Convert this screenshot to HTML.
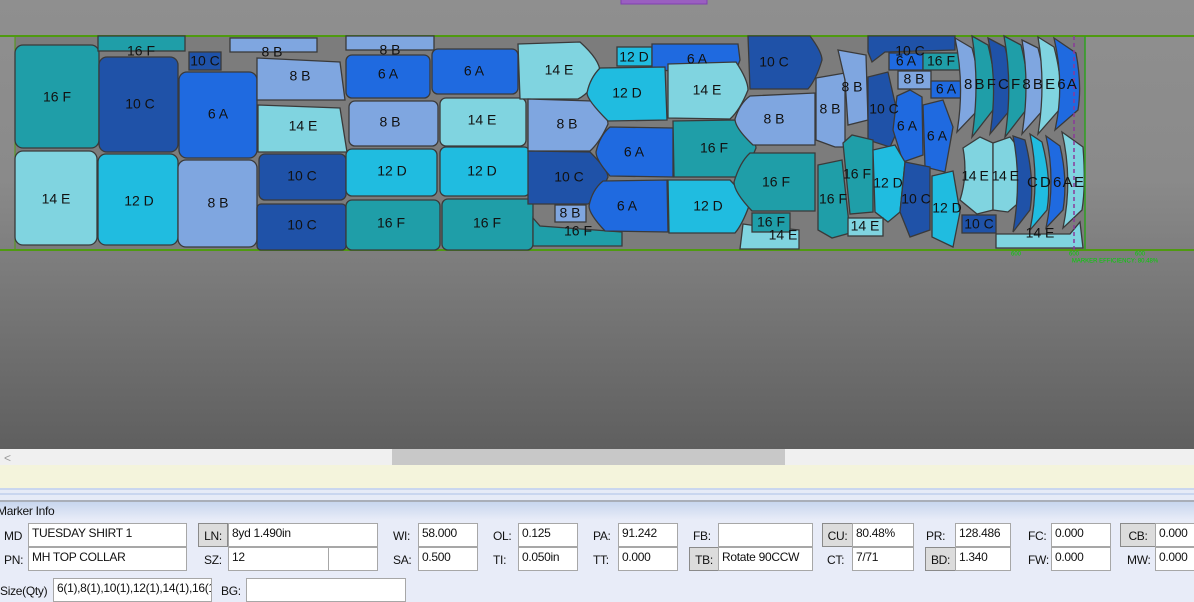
<!DOCTYPE html>
<html><head><meta charset="utf-8"><style>
*{margin:0;padding:0;box-sizing:border-box}
body{width:1194px;height:598px;overflow:hidden;font-family:"Liberation Sans",sans-serif;position:relative;background:#e8ecf8}
#view{position:absolute;left:0;top:0;width:1194px;height:449px;background:linear-gradient(#8f8f8f,#8a8a8a 40%,#5f5f5f)}
#sb{position:absolute;left:0;top:449px;width:1194px;height:16px;background:#f0f0f0}
#thumb{position:absolute;left:392px;top:0;width:393px;height:16px;background:#c8c8c8}
#beige{position:absolute;left:0;top:465px;width:1194px;height:23px;background:#f4f4dc}
#band{position:absolute;left:0;top:488px;width:1194px;height:12px;background:#e6ebf7;border-top:2px solid #c9d6ef;}
#band:after{content:"";position:absolute;left:0;top:3px;width:100%;height:2px;background:#c9d6ef}
#hdr{position:absolute;left:0;top:500px;width:1194px;height:20px;border-top:2px solid #a9aeb8;background:linear-gradient(#c8d6ee,#e8ecf8);font-size:12px;color:#111;padding:2px 0 0 0;text-indent:-3px;letter-spacing:-0.3px}
.l{position:absolute;font-size:12px;color:#111;letter-spacing:-0.3px}
.i{position:absolute;height:24px;background:#fff;border:1px solid #a7a7a7;font-size:12px;color:#111;padding:2px 0 0 3px;white-space:nowrap;overflow:hidden;letter-spacing:-0.3px}
.b{position:absolute;height:24px;background:#dcdcdc;border:1px solid #8a8a8a;font-size:12px;color:#111;text-align:center;padding-top:5px;letter-spacing:-0.3px}
svg text{font-family:"Liberation Sans",sans-serif;font-size:14px;fill:#111;text-anchor:middle;dominant-baseline:middle}
</style></head><body>
<div id="view">
<svg width="1194" height="449" style="position:absolute;left:0;top:0">
<rect x="621" y="-2" width="86" height="6" fill="#9a5fc0" stroke="#8040b0"/>
<rect x="15" y="36" width="1070" height="214" fill="#7c7c7c"/>
<line x1="0" y1="36" x2="1194" y2="36" stroke="#4f9a10" stroke-width="2"/>
<line x1="0" y1="250" x2="1194" y2="250" stroke="#4f9a10" stroke-width="2"/>
<line x1="15" y1="36" x2="15" y2="250" stroke="#4f9a10" stroke-width="1"/>
<g stroke="#3a3a3a" stroke-width="1.3">
<rect x="15" y="45" width="84" height="103" rx="8" fill="#1f9ea8"/>
<rect x="15" y="151" width="82" height="94" rx="8" fill="#80d4e0"/>
<rect x="98" y="36" width="87" height="15" fill="#1f9ea8"/>
<rect x="99" y="57" width="79" height="95" rx="8" fill="#1f52a8"/>
<rect x="98" y="154" width="80" height="91" rx="8" fill="#20bce0"/>
<rect x="189" y="52" width="32" height="18" fill="#1f52a8"/>
<rect x="179" y="72" width="78" height="86" rx="8" fill="#1f6ae0"/>
<rect x="178" y="160" width="79" height="87" rx="8" fill="#7fa6e0"/>
<rect x="230" y="38" width="87" height="14" fill="#7fa6e0"/>
<path d="M257,58 L340,62 L345,100 L257,100Z" fill="#7fa6e0"/>
<path d="M258,105 L340,108 L347,152 L258,152Z" fill="#80d4e0"/>
<rect x="259" y="154" width="87" height="46" rx="6" fill="#1f52a8"/>
<rect x="257" y="204" width="89" height="46" rx="4" fill="#1f52a8"/>
<rect x="346" y="36" width="88" height="14" fill="#7fa6e0"/>
<rect x="346" y="55" width="84" height="43" rx="6" fill="#1f6ae0"/>
<rect x="349" y="101" width="89" height="45" rx="6" fill="#7fa6e0"/>
<rect x="346" y="149" width="91" height="47" rx="6" fill="#20bce0"/>
<rect x="346" y="200" width="94" height="50" rx="6" fill="#1f9ea8"/>
<rect x="432" y="49" width="86" height="45" rx="6" fill="#1f6ae0"/>
<rect x="440" y="98" width="86" height="48" rx="6" fill="#80d4e0"/>
<rect x="440" y="147" width="90" height="49" rx="6" fill="#20bce0"/>
<rect x="442" y="199" width="91" height="51" rx="6" fill="#1f9ea8"/>
<path d="M518,44 L580,42 Q600,60 600,72 Q592,92 578,99 L520,99Z" fill="#80d4e0"/>
<path d="M528,99 L592,101 Q608,115 608,124 Q600,142 590,151 L528,151Z" fill="#7fa6e0"/>
<path d="M528,151 L590,152 Q608,170 608,177 Q600,196 588,204 L528,204Z" fill="#1f52a8"/>
<rect x="555" y="205" width="31" height="17" fill="#7fa6e0"/>
<path d="M533,218 L540,226 L622,232 L622,246 L533,246Z" fill="#1f9ea8"/>
<rect x="617" y="47" width="35" height="19" fill="#20bce0"/>
<path d="M652,44 L738,44 L740,60 L735,73 L652,70Z" fill="#1f6ae0"/>
<path d="M600,68 L665,67 L667,120 L608,121 Q587,100 587,93 Q590,78 600,68Z" fill="#20bce0"/>
<path d="M668,64 L736,62 Q748,80 748,90 Q740,110 730,119 L668,118Z" fill="#80d4e0"/>
<path d="M610,127 L673,128 L673,177 L610,176 Q596,160 596,152 Q600,135 610,127Z" fill="#1f6ae0"/>
<path d="M673,121 L735,120 Q756,140 756,148 Q748,168 740,177 L674,177Z" fill="#1f9ea8"/>
<path d="M603,181 L667,180 L668,232 L605,231 Q589,214 589,206 Q592,190 603,181Z" fill="#1f6ae0"/>
<path d="M668,180 L730,180 Q749,200 749,206 Q742,225 735,233 L669,233Z" fill="#20bce0"/>
<path d="M748,36 L810,36 Q822,52 822,60 Q816,80 808,89 L750,89Z" fill="#1f52a8"/>
<path d="M750,96 L815,93 L815,145 L753,145 Q735,128 735,119 Q740,103 750,96Z" fill="#7fa6e0"/>
<path d="M750,153 L815,153 L815,211 L752,211 Q734,192 734,182 Q740,162 750,153Z" fill="#1f9ea8"/>
<path d="M743,224 L750,225 L799,230 L799,249 L740,249Z" fill="#80d4e0"/>
<rect x="752" y="213" width="38" height="19" fill="#1f9ea8"/>
<path d="M816,78 L845,73 L845,147 L835,147 L816,140Z" fill="#7fa6e0"/>
<path d="M838,50 L866,55 L868,120 L848,125 L845,80Z" fill="#7fa6e0"/>
<path d="M868,36 L955,36 L955,50 L885,52 L872,62 L868,52Z" fill="#1f52a8"/>
<rect x="889" y="53" width="34" height="17" fill="#1f6ae0"/>
<rect x="923" y="53" width="37" height="17" fill="#1f9ea8"/>
<rect x="898" y="71" width="33" height="18" fill="#7fa6e0"/>
<rect x="931" y="81" width="34" height="17" fill="#1f6ae0"/>
<path d="M868,77 L888,72 L900,125 L890,147 L868,140Z" fill="#1f52a8"/>
<path d="M897,96 L910,90 L922,97 L923,155 L903,162 L893,130Z" fill="#1f6ae0"/>
<path d="M923,105 L943,100 L953,127 L945,172 L925,167Z" fill="#1f6ae0"/>
<path d="M843,143 L852,135 L873,140 L873,212 L850,214Z" fill="#1f9ea8"/>
<path d="M818,165 L842,160 L850,233 L832,238 L818,230Z" fill="#1f9ea8"/>
<path d="M873,150 L895,145 L905,162 L900,212 L888,222 L875,212Z" fill="#20bce0"/>
<path d="M905,162 L930,167 L930,230 L910,237 L900,212Z" fill="#1f52a8"/>
<path d="M932,176 L953,171 L960,212 L953,247 L932,237Z" fill="#20bce0"/>
<rect x="848" y="218" width="35" height="18" fill="#80d4e0"/>
<rect x="962" y="215" width="34" height="18" fill="#1f52a8"/>
<path d="M955,38 L972,48 Q982,85 978,110 L957,132 Q965,85 955,38Z" fill="#7fa6e0"/>
<path d="M972,36 L988,45 Q998,85 993,110 L972,137 Q980,85 972,36Z" fill="#1f9ea8"/>
<path d="M988,38 L1005,47 Q1015,85 1010,110 L990,134 Q998,85 988,38Z" fill="#1f52a8"/>
<path d="M1004,36 L1021,45 Q1031,85 1026,110 L1005,137 Q1013,85 1004,36Z" fill="#1f9ea8"/>
<path d="M1022,40 L1038,48 Q1048,85 1043,110 L1022,134 Q1030,85 1022,40Z" fill="#7fa6e0"/>
<path d="M1038,37 L1054,47 Q1064,85 1059,110 L1038,134 Q1046,85 1038,37Z" fill="#80d4e0"/>
<path d="M1054,38 L1076,53 Q1082,85 1078,110 L1055,130 Q1065,85 1054,38Z" fill="#1f6ae0"/>
<path d="M963,148 L980,137 L993,143 L993,210 L977,214 L960,200 Q968,175 963,148Z" fill="#80d4e0"/>
<path d="M993,143 L1010,137 L1020,150 Q1015,175 1022,200 L1008,212 L993,210Z" fill="#80d4e0"/>
<path d="M1013,136 L1025,140 Q1035,180 1030,210 L1013,232 Q1022,180 1013,136Z" fill="#1f52a8"/>
<path d="M1030,134 L1042,142 Q1052,180 1047,210 L1030,230 Q1040,180 1030,134Z" fill="#20bce0"/>
<path d="M1046,136 L1060,146 Q1068,180 1063,210 L1046,228 Q1056,180 1046,136Z" fill="#1f6ae0"/>
<path d="M1062,132 L1083,147 Q1086,185 1082,210 L1063,228 Q1073,180 1062,132Z" fill="#80d4e0"/>
<path d="M996,234 L1070,234 L1080,222 L1083,248 L996,248Z" fill="#80d4e0"/>
</g>
<line x1="1074" y1="36" x2="1074" y2="250" stroke="#8a3a9a" stroke-width="1.5" stroke-dasharray="4,3"/>
<line x1="1085" y1="36" x2="1085" y2="250" stroke="#2fa020" stroke-width="1.5"/>
<text x="1016" y="254" style="font-size:6px;fill:#00d000">600</text>
<text x="1074" y="254" style="font-size:6px;fill:#00d000">600</text>
<text x="1140" y="254" style="font-size:6px;fill:#00d000">600</text>
<text x="1115" y="261" style="font-size:6px;fill:#00d000">MARKER EFFICIENCY: 80.48%</text>
<g>
<text x="57" y="98">16 F</text><text x="56" y="200">14 E</text><text x="141" y="52">16 F</text>
<text x="140" y="105">10 C</text><text x="139" y="202">12 D</text><text x="205" y="62">10 C</text>
<text x="218" y="115">6 A</text><text x="218" y="204">8 B</text><text x="272" y="53">8 B</text>
<text x="300" y="77">8 B</text><text x="303" y="127">14 E</text><text x="302" y="177">10 C</text>
<text x="302" y="226">10 C</text><text x="390" y="51">8 B</text><text x="388" y="75">6 A</text>
<text x="390" y="123">8 B</text><text x="392" y="172">12 D</text><text x="391" y="224">16 F</text>
<text x="474" y="72">6 A</text><text x="482" y="121">14 E</text><text x="482" y="172">12 D</text>
<text x="487" y="224">16 F</text><text x="559" y="71">14 E</text><text x="567" y="125">8 B</text>
<text x="569" y="178">10 C</text><text x="570" y="214">8 B</text><text x="578" y="232">16 F</text>
<text x="634" y="58">12 D</text><text x="697" y="60">6 A</text><text x="627" y="94">12 D</text>
<text x="707" y="91">14 E</text><text x="634" y="153">6 A</text><text x="714" y="149">16 F</text>
<text x="627" y="207">6 A</text><text x="708" y="207">12 D</text><text x="774" y="63">10 C</text>
<text x="774" y="120">8 B</text><text x="776" y="183">16 F</text><text x="771" y="223">16 F</text>
<text x="783" y="236">14 E</text><text x="830" y="110">8 B</text><text x="852" y="88">8 B</text>
<text x="910" y="52">10 C</text><text x="906" y="62">6 A</text><text x="941" y="62">16 F</text>
<text x="914" y="80">8 B</text><text x="946" y="90">6 A</text><text x="884" y="110">10 C</text>
<text x="907" y="127">6 A</text><text x="937" y="137">6 A</text><text x="857" y="175">16 F</text>
<text x="833" y="200">16 F</text><text x="888" y="184">12 D</text><text x="916" y="200">10 C</text>
<text x="947" y="209">12 D</text><text x="865" y="227">14 E</text><text x="979" y="225">10 C</text>
<text x="1020" y="85" style="font-size:15px;letter-spacing:-1px">8 B F C F 8 B E 6 A</text>
<text x="990" y="177" style="letter-spacing:-0.5px">14 E 14 E</text><text x="1055" y="183" style="font-size:15px;letter-spacing:-1px">C D 6 A E</text>
<text x="1040" y="234">14 E</text>
</g>
</svg>
</div>
<div id="sb"><span style="position:absolute;left:4px;top:2px;font-size:12px;color:#999">&lt;</span><div id="thumb"></div></div>
<div id="beige"></div>
<div id="band"></div>
<div id="hdr">Marker Info</div>

<div class="l" style="left:4px;top:529px">MD</div>
<div class="i" style="left:28px;top:523px;width:159px">TUESDAY SHIRT 1</div>
<div class="l" style="left:4px;top:553px">PN:</div>
<div class="i" style="left:28px;top:547px;width:159px">MH TOP COLLAR</div>
<div class="b" style="left:198px;top:523px;width:30px">LN:</div>
<div class="i" style="left:228px;top:523px;width:150px">8yd 1.490in</div>
<div class="l" style="left:204px;top:553px">SZ:</div>
<div class="i" style="left:228px;top:547px;width:101px">12</div>
<div class="i" style="left:328px;top:547px;width:50px"></div>
<div class="l" style="left:393px;top:529px">WI:</div>
<div class="i" style="left:418px;top:523px;width:60px">58.000</div>
<div class="l" style="left:393px;top:553px">SA:</div>
<div class="i" style="left:418px;top:547px;width:60px">0.500</div>
<div class="l" style="left:493px;top:529px">OL:</div>
<div class="i" style="left:518px;top:523px;width:60px">0.125</div>
<div class="l" style="left:493px;top:553px">TI:</div>
<div class="i" style="left:518px;top:547px;width:60px">0.050in</div>
<div class="l" style="left:593px;top:529px">PA:</div>
<div class="i" style="left:618px;top:523px;width:60px">91.242</div>
<div class="l" style="left:593px;top:553px">TT:</div>
<div class="i" style="left:618px;top:547px;width:60px">0.000</div>
<div class="l" style="left:693px;top:529px">FB:</div>
<div class="i" style="left:718px;top:523px;width:95px"></div>
<div class="b" style="left:689px;top:547px;width:30px">TB:</div>
<div class="i" style="left:718px;top:547px;width:95px">Rotate 90CCW</div>
<div class="b" style="left:822px;top:523px;width:31px">CU:</div>
<div class="i" style="left:852px;top:523px;width:62px">80.48%</div>
<div class="l" style="left:827px;top:553px">CT:</div>
<div class="i" style="left:852px;top:547px;width:62px">7/71</div>
<div class="l" style="left:926px;top:529px">PR:</div>
<div class="i" style="left:955px;top:523px;width:56px">128.486</div>
<div class="b" style="left:925px;top:547px;width:31px">BD:</div>
<div class="i" style="left:955px;top:547px;width:56px">1.340</div>
<div class="l" style="left:1028px;top:529px">FC:</div>
<div class="i" style="left:1051px;top:523px;width:60px">0.000</div>
<div class="l" style="left:1028px;top:553px">FW:</div>
<div class="i" style="left:1051px;top:547px;width:60px">0.000</div>
<div class="b" style="left:1120px;top:523px;width:36px">CB:</div>
<div class="i" style="left:1155px;top:523px;width:45px">0.000</div>
<div class="l" style="left:1127px;top:553px">MW:</div>
<div class="i" style="left:1155px;top:547px;width:45px">0.000</div>
<div class="l" style="left:0px;top:584px">Size(Qty)</div>
<div class="i" style="left:53px;top:578px;width:159px">6(1),8(1),10(1),12(1),14(1),16(1</div>
<div class="l" style="left:221px;top:584px">BG:</div>
<div class="i" style="left:246px;top:578px;width:160px"></div>
</body></html>
